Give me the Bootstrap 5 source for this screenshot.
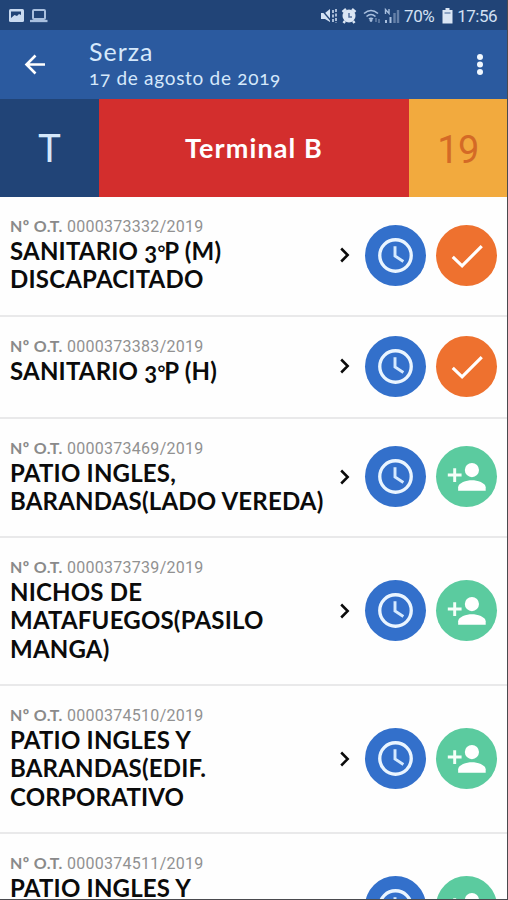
<!DOCTYPE html>
<html lang="es">
<head>
<meta charset="utf-8">
<meta name="viewport" content="width=device-width, initial-scale=1">
<title>Serza</title>
<link href="https://cdn.jsdelivr.net/npm/bootstrap@5.3.0/dist/css/bootstrap.min.css" rel="stylesheet">
<style>
body{font-family:Lato,sans-serif;background:#fefefe;color:#0b0b0b}
.screen{height:900px;border-right:1px solid #4a4a4e;border-bottom:1px solid #4a4a4e}
.statusbar{height:30px;background:#214477;color:#d3e1f3;font:400 17px/30px Roboto,sans-serif;letter-spacing:-.5px;padding:2px 10px 0 8px}
.appbar{height:69px;background:#2b5a9f;color:#d5e8fb;padding-left:23px;padding-right:15px}
.heading{margin-left:42px;margin-top:-3px}
.heading h1{font-size:25px;line-height:29px;letter-spacing:1px}
.heading p{font-size:19px;line-height:23px;font-variant-numeric:oldstyle-nums;letter-spacing:.7px}
.strip{height:98px}
.cell-t{width:99px;background:#214477;color:#d5e8fb;font-weight:400;font-size:38px;padding-bottom:2px}
.cell-name{background:#d32e2d;color:#fff;font-weight:700;font-size:27px;letter-spacing:1.1px}
.cell-n{width:98px;background:#f2aa3e;color:#d46a26;font:400 38px Roboto,sans-serif;letter-spacing:-.5px;padding-top:4px}
.order{border-bottom:2px solid #e9e9ea;padding:18px 10px 19px}
.order .lbl{height:22px;line-height:22px;font:400 16px/22px Roboto,sans-serif;color:#919191;letter-spacing:.27px}
.order .lbl b{font-family:Lato,sans-serif;color:#8a8a8a;letter-spacing:.35px}
.ttl{font-size:24px;line-height:28.4px;font-weight:700;font-variant-numeric:oldstyle-nums;letter-spacing:.2px;white-space:nowrap}
.deg{letter-spacing:-1px;font-size:19px;line-height:1}
.h1l{height:102px}.h2l{height:119.5px}.h3l{height:148px}
.controls{gap:10px}
.chev{margin-right:5px}
.disc{width:61px;height:61px}
.blue{background:#3370cb}.orange{background:#ee712f}.green{background:#5bcb9f}
</style>
<script src="https://cdn.jsdelivr.net/npm/bootstrap@5.3.0/dist/js/bootstrap.bundle.min.js"></script>
</head>
<body>
<svg class="d-none">
<symbol id="clock" viewBox="0 0 62 62"><circle cx="31" cy="31" r="16" fill="none" stroke="#eaf5ff" stroke-width="3.400"/><path d="M30.500 21.500V31.500L39 37" fill="none" stroke="#d5eaff" stroke-width="3"/></symbol>
<symbol id="check" viewBox="0 0 62 62"><path d="M17 32.500L26.500 41.500L46.500 21.500" fill="none" stroke="#fff" stroke-width="3.200"/></symbol>
<symbol id="add" viewBox="0 0 62 62"><path d="M12 29.500H26M19 22.500V36.500" stroke="#f4fff9" stroke-width="3"/><circle cx="36.500" cy="24.500" r="7.200" fill="#fff"/><path d="M22.500 45.500V42C22.500 37.300 31 34.700 36.500 34.700S50.500 37.300 50.500 42V45.500Z" fill="#fff"/></symbol>
<symbol id="chev" viewBox="0 0 10 16"><path d="M1.200 1.500L7.700 8L1.200 14.500" fill="none" stroke="#0b0b0b" stroke-width="2.500"/></symbol>
</svg>
<main class="screen d-flex flex-column overflow-hidden">
<div class="statusbar d-flex align-items-center flex-shrink-0">
<svg width="40" height="16" viewBox="0 0 40 16"><rect x="1" y="1" width="15" height="13" rx="1.500" fill="#c9daf0"/><path d="M3 3.500H13V7L11 6L9 8L6.500 7L3 10Z" fill="#214477"/><rect x="25" y="2" width="12" height="9" rx="1" fill="none" stroke="#a9c0df" stroke-width="2"/><path d="M22 13H39.500" stroke="#a9c0df" stroke-width="2.300"/></svg>
<svg class="ms-auto" width="80" height="18" viewBox="0 0 80 18"><path d="M1 6H5L10 2V15L5 12H1Z" fill="#d3e1f3"/><path d="M1 2L12 15" stroke="#214477" stroke-width="1.300"/><path d="M13 3V15M16 2V16" stroke="#b5c8e1" stroke-width="1.800" stroke-dasharray="3 1.500"/><circle cx="29" cy="9" r="6.500" fill="#dbe6f4"/><path d="M22.500 5L26 2M32 2L35.500 5M25 14L23.500 16M33 14L34.500 16" stroke="#dbe6f4" stroke-width="2.500"/><path d="M29 6V10H32" fill="none" stroke="#55719d" stroke-width="1.500"/><g fill="none" stroke="#a9c0df" stroke-width="1.600"><path d="M44 6.500Q51 .5 58 6.500M46.500 9.500Q51 5.500 55.500 9.500M49 12Q51 10.500 53 12"/></g><circle cx="51" cy="13.500" r="1.400" fill="#a9c0df"/><path d="M56 11V15M59 12V16" stroke="#7790b5" stroke-width="1.200"/><path d="M65.500 7V2.500L69 6.500V2" fill="none" stroke="#a9c0df" stroke-width="1.400"/><path d="M66 13V16M70.500 10V16" stroke="#a9c0df" stroke-width="2"/><path d="M74.500 6V16M78 3V16" stroke="#6580a8" stroke-width="2.400"/></svg>
<span class="ms-1">70%</span>
<svg class="ms-2 me-1" width="11" height="16" viewBox="0 0 11 16"><path d="M3.500 0H7.500V2H10.500V15.500H.5V2H3.500Z" fill="#dbe6f4"/><path d="M2.500 4H8.500V6H2.500Z" fill="#8ea5c5"/></svg>
<span>17:56</span>
</div>
<header class="appbar d-flex align-items-center flex-shrink-0">
<svg width="24" height="24" viewBox="0 0 24 24"><path d="M22 11.500H4M12.500 2.500L3.500 11.500L12.500 20.500" fill="none" stroke="#fff" stroke-width="2.600"/></svg>
<div class="heading"><h1 class="m-0 mb-0 fw-normal">Serza</h1><p class="m-0">17 de agosto de 2019</p></div>
<svg class="ms-auto" width="24" height="24" viewBox="0 0 24 24"><g fill="#f1f8ff"><circle cx="12" cy="4" r="3"/><circle cx="12" cy="11.500" r="3"/><circle cx="12" cy="19" r="3"/></g></svg>
</header>
<section class="strip d-flex flex-shrink-0 text-center">
<div class="cell-t d-flex align-items-center justify-content-center">T</div>
<div class="cell-name flex-grow-1 d-flex align-items-center justify-content-center">Terminal B</div>
<div class="cell-n d-flex align-items-center justify-content-center">19</div>
</section>
<section>
<article class="order h2l d-flex"><div class="flex-grow-1"><div class="lbl"><b>Nº O.T.</b> 0000373332/2019</div><div class="ttl">SANITARIO 3<span class="deg">°</span>P (M)<br>DISCAPACITADO</div></div><div class="controls d-flex align-items-center flex-shrink-0"><svg class="chev" width="10" height="16"><use href="#chev"/></svg><svg class="disc blue rounded-circle"><use href="#clock"/></svg><svg class="disc orange rounded-circle"><use href="#check"/></svg></div></article>
<article class="order h1l d-flex"><div class="flex-grow-1"><div class="lbl"><b>Nº O.T.</b> 0000373383/2019</div><div class="ttl">SANITARIO 3<span class="deg">°</span>P (H)</div></div><div class="controls d-flex align-items-center flex-shrink-0"><svg class="chev" width="10" height="16"><use href="#chev"/></svg><svg class="disc blue rounded-circle"><use href="#clock"/></svg><svg class="disc orange rounded-circle"><use href="#check"/></svg></div></article>
<article class="order h2l d-flex"><div class="flex-grow-1"><div class="lbl"><b>Nº O.T.</b> 0000373469/2019</div><div class="ttl">PATIO INGLES,<br>BARANDAS(LADO VEREDA)</div></div><div class="controls d-flex align-items-center flex-shrink-0"><svg class="chev" width="10" height="16"><use href="#chev"/></svg><svg class="disc blue rounded-circle"><use href="#clock"/></svg><svg class="disc green rounded-circle"><use href="#add"/></svg></div></article>
<article class="order h3l d-flex"><div class="flex-grow-1"><div class="lbl"><b>Nº O.T.</b> 0000373739/2019</div><div class="ttl">NICHOS DE<br>MATAFUEGOS(PASILO<br>MANGA)</div></div><div class="controls d-flex align-items-center flex-shrink-0"><svg class="chev" width="10" height="16"><use href="#chev"/></svg><svg class="disc blue rounded-circle"><use href="#clock"/></svg><svg class="disc green rounded-circle"><use href="#add"/></svg></div></article>
<article class="order h3l d-flex"><div class="flex-grow-1"><div class="lbl"><b>Nº O.T.</b> 0000374510/2019</div><div class="ttl">PATIO INGLES Y<br>BARANDAS(EDIF.<br>CORPORATIVO</div></div><div class="controls d-flex align-items-center flex-shrink-0"><svg class="chev" width="10" height="16"><use href="#chev"/></svg><svg class="disc blue rounded-circle"><use href="#clock"/></svg><svg class="disc green rounded-circle"><use href="#add"/></svg></div></article>
<article class="order h3l d-flex"><div class="flex-grow-1"><div class="lbl"><b>Nº O.T.</b> 0000374511/2019</div><div class="ttl">PATIO INGLES Y</div></div><div class="controls d-flex align-items-center flex-shrink-0"><svg class="chev" width="10" height="16"><use href="#chev"/></svg><svg class="disc blue rounded-circle"><use href="#clock"/></svg><svg class="disc green rounded-circle"><use href="#add"/></svg></div></article>
</section>
</main>
</body>
</html>
